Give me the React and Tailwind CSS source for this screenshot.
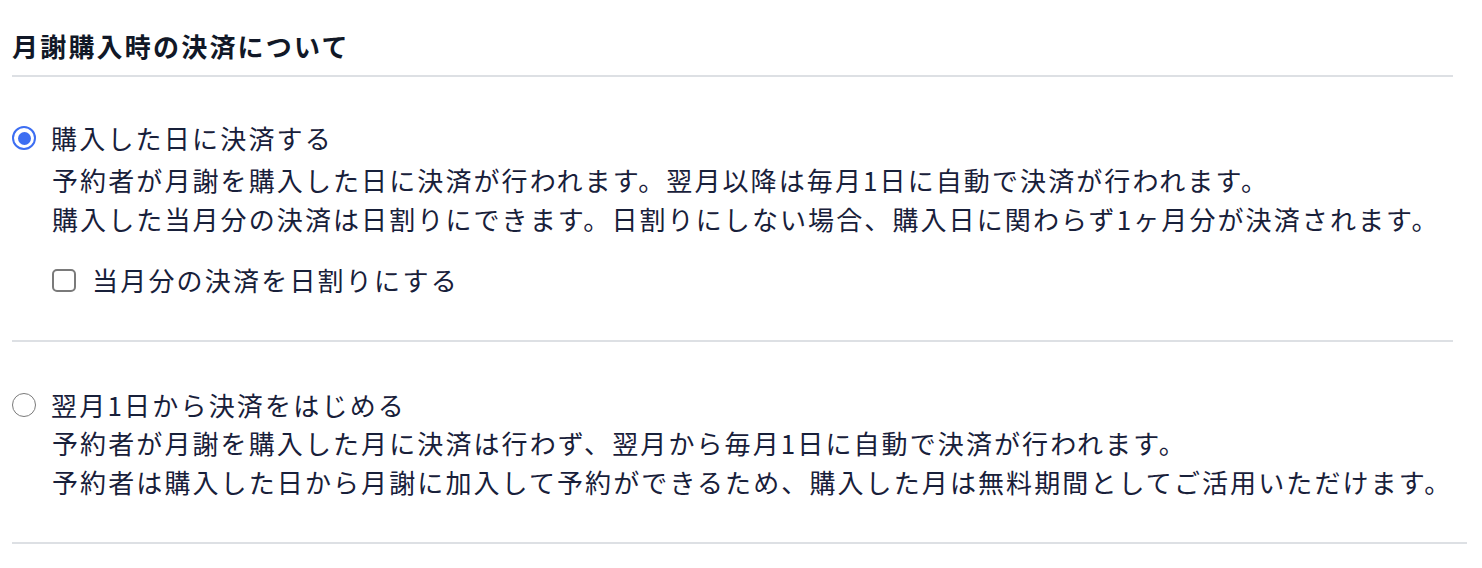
import React from 'react';

const FONT = { fontFamily: '"Hiragino Sans", "Noto Sans CJK JP", "Noto Sans", sans-serif' };

function Radio({ checked }) {
  return checked ? (
    <span className="w-6 h-6 shrink-0 rounded-full border-2 border-[#3d6ef2] flex items-center justify-center">
      <span className="w-[13px] h-[13px] rounded-full bg-[#3d6ef2]" />
    </span>
  ) : (
    <span className="w-6 h-6 shrink-0 rounded-full border-[1.5px] border-[#7a7a7a] bg-white" />
  );
}

function Checkbox() {
  return <span className="w-6 h-[23px] shrink-0 rounded-[5px] border-2 border-[#7a7a7a] bg-white" />;
}

export default function App() {
  return (
    <div className="bg-white w-[1482px] h-[568px] pl-3 text-[#18203a]" style={FONT}>
      {/* Heading */}
      <div className="w-[1441px] border-b-2 border-[#dde0e4] pt-[26px] pb-[9px]">
        <h2 className="text-[26px] leading-[40px] font-bold tracking-[2.2px] text-[#111827]">
          月謝購入時の決済について
        </h2>
      </div>

      {/* Option 1 */}
      <div className="w-[1441px] border-b-2 border-[#dde0e4] pt-[41px] pb-[40px]">
        <label className="flex items-center gap-[15px] h-10">
          <Radio checked />
          <span className="text-[26px] tracking-[2.2px] leading-10">購入した日に決済する</span>
        </label>
        <div className="pl-[40px] mt-[2px] text-[26px] tracking-[2.1px] leading-[39px]">
          <p>予約者が月謝を購入した日に決済が行われます。翌月以降は毎月1日に自動で決済が行われます。</p>
          <p>購入した当月分の決済は日割りにできます。日割りにしない場合、購入日に関わらず1ヶ月分が決済されます。</p>
        </div>
        <label className="flex items-center gap-[16px] h-10 pl-[40px] mt-[22px]">
          <Checkbox />
          <span className="text-[26px] tracking-[2.2px] leading-10">当月分の決済を日割りにする</span>
        </label>
      </div>

      {/* Option 2 */}
      <div className="w-[1455px] border-b-2 border-[#dde0e4] pt-[43px] pb-[41px]">
        <label className="flex items-center gap-[15px] h-10">
          <Radio />
          <span className="text-[26px] tracking-[2.2px] leading-10">翌月1日から決済をはじめる</span>
        </label>
        <div className="pl-[40px] -mt-[2px] text-[26px] tracking-[2.1px] leading-[39px]">
          <p>予約者が月謝を購入した月に決済は行わず、翌月から毎月1日に自動で決済が行われます。</p>
          <p>予約者は購入した日から月謝に加入して予約ができるため、購入した月は無料期間としてご活用いただけます。</p>
        </div>
      </div>
    </div>
  );
}
